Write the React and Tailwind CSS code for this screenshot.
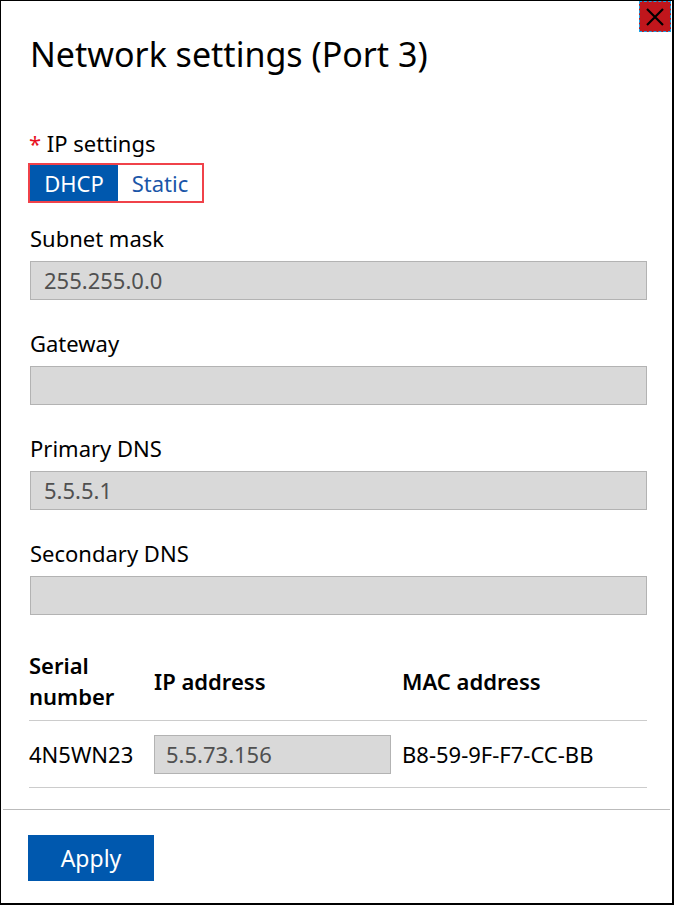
import { useState } from "react";

const FONT = { fontFamily: '"Segoe UI", "Noto Sans", "Open Sans", sans-serif' };

const Field = ({ label, value, first }) => (
  <div className={first ? "mt-[20px]" : "mt-[28px]"}>
    <div className="text-[22px] leading-[30px] text-black">{label}</div>
    <div className="mt-[8px] h-[39px] bg-[#d9d9d9] border border-[#b3b3b3] flex items-center px-[13px] text-[22px] text-[#505050]">
      {value}
    </div>
  </div>
);

export default function App() {
  const [mode, setMode] = useState("dhcp");

  return (
    <div
      className="relative w-[674px] h-[905px] bg-white border-l border-t border-r-2 border-b-2 border-black overflow-hidden"
      style={FONT}
    >
      {/* Close */}
      <button className="absolute right-[1px] top-0 w-[32px] h-[31px] bg-[#c0161c] border border-dashed border-[#1ba1e2] flex items-center justify-center">
        <svg width="20" height="20" viewBox="0 0 20 20">
          <path d="M2 2 L18 18 M18 2 L2 18" stroke="#000" strokeWidth="2.2" />
        </svg>
      </button>

      <div className="pl-[27px] pr-[25px]">
        <h1 className="pt-[30px] text-[34px] leading-[46px] text-black pl-[2px]">
          Network settings (Port 3)
        </h1>

        <div className="mt-[51px] text-[22px] leading-[30px] pl-[1px]">
          <span className="text-[#e81123]">*</span> IP settings
        </div>
        <div className="mt-[5px] inline-flex border-2 border-[#f0424a]">
          <button
            onClick={() => setMode("dhcp")}
            className={`h-[36px] w-[88px] text-[22px] ${mode === "dhcp" ? "bg-[#0058ae] text-white" : "bg-white text-[#1a56a8]"}`}
          >
            DHCP
          </button>
          <button
            onClick={() => setMode("static")}
            className={`h-[36px] w-[84px] text-[22px] ${mode === "static" ? "bg-[#0058ae] text-white" : "bg-white text-[#1a56a8]"}`}
          >
            Static
          </button>
        </div>

        <div className="pl-[2px]">
          <Field first label="Subnet mask" value="255.255.0.0" />
          <Field label="Gateway" value="" />
          <Field label="Primary DNS" value="5.5.5.1" />
          <Field label="Secondary DNS" value="" />
        </div>

        {/* Table */}
        <div className="mt-[27px] pl-[1px]">
          <div className="flex items-center h-[79px] border-b border-[#cccccc] text-[22px] font-semibold leading-[31px]">
            <div className="w-[125px]">
              Serial
              <br />
              number
            </div>
            <div className="w-[248px]">IP address</div>
            <div>MAC address</div>
          </div>
          <div className="flex items-center h-[67px] border-b border-[#cccccc] text-[22px]">
            <div className="w-[125px]">4N5WN23</div>
            <div className="w-[248px]">
              <div className="w-[237px] h-[39px] bg-[#d9d9d9] border border-[#b3b3b3] flex items-center px-[11px] text-[#505050]">
                5.5.73.156
              </div>
            </div>
            <div>B8-59-9F-F7-CC-BB</div>
          </div>
        </div>
      </div>

      <div className="mt-[21px] mx-[2px] border-t border-[#bbbbbb]" />

      <div className="pl-[27px] pt-[25px]">
        <button className="w-[126px] h-[46px] bg-[#0058ae] text-white text-[23px]">Apply</button>
      </div>
    </div>
  );
}
